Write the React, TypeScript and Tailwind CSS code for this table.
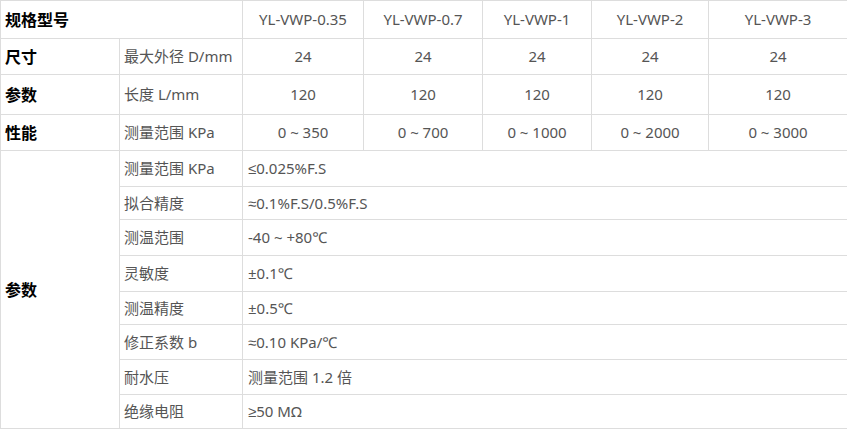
import React from "react";

const models = ["YL-VWP-0.35", "YL-VWP-0.7", "YL-VWP-1", "YL-VWP-2", "YL-VWP-3"];
const topRows = [
  { h: "h-[36px]", label: "尺寸", name: "最大外径 D/mm", vals: ["24", "24", "24", "24", "24"] },
  { h: "h-[40px]", label: "参数", name: "长度 L/mm", vals: ["120", "120", "120", "120", "120"] },
  { h: "h-[36px]", label: "性能", name: "测量范围 KPa", vals: ["0 ~ 350", "0 ~ 700", "0 ~ 1000", "0 ~ 2000", "0 ~ 3000"] },
];
const params = [
  { h: "h-[36px]", name: "测量范围 KPa", val: "≤0.025%F.S" },
  { h: "h-[33px]", name: "拟合精度", val: "≈0.1%F.S/0.5%F.S" },
  { h: "h-[36px]", name: "测温范围", val: "-40 ~ +80℃" },
  { h: "h-[36px]", name: "灵敏度", val: "±0.1℃" },
  { h: "h-[33px]", name: "测温精度", val: "±0.5℃" },
  { h: "h-[35px]", name: "修正系数 b", val: "≈0.10 KPa/℃" },
  { h: "h-[35px]", name: "耐水压", val: "测量范围 1.2 倍" },
  { h: "h-[34px]", name: "绝缘电阻", val: "≥50 MΩ" },
];

const font = { fontFamily: '"Noto Sans", "Liberation Sans", "Noto Sans CJK SC", sans-serif' };

export default function App() {
  const bd = "border border-[#dddddd]";
  const lab = `${bd} px-[4px] text-left font-bold text-[16px] text-black`;
  const cell = `${bd} px-[4px] text-left text-[15px] text-[#555555]`;
  const ctr = `${bd} text-center text-[15px] text-[#555555]`;
  return (
    <div className="w-[847px] h-[430px] bg-white" style={font}>
      <table className="table-fixed border-collapse w-[847px] leading-none">
        <colgroup>
          <col className="w-[119px]" />
          <col className="w-[123px]" />
          <col className="w-[121px]" />
          <col className="w-[119px]" />
          <col className="w-[109px]" />
          <col className="w-[117px]" />
          <col className="w-[139px]" />
        </colgroup>
        <tbody>
          <tr className="h-[38px]">
            <td colSpan={2} className={lab}>规格型号</td>
            {models.map((m) => (
              <td key={m} className={ctr}>{m}</td>
            ))}
          </tr>
          {topRows.map((r) => (
            <tr key={r.name + r.label} className={r.h}>
              <td className={lab}>{r.label}</td>
              <td className={cell}>{r.name}</td>
              {r.vals.map((v, i) => (
                <td key={i} className={ctr}>{v}</td>
              ))}
            </tr>
          ))}
          {params.map((p, i) => (
            <tr key={p.name + i} className={p.h}>
              {i === 0 && (
                <td rowSpan={params.length} className={lab}>参数</td>
              )}
              <td className={cell}>{p.name}</td>
              <td colSpan={5} className={`${cell} pl-[5px]`}>{p.val}</td>
            </tr>
          ))}
        </tbody>
      </table>
    </div>
  );
}
